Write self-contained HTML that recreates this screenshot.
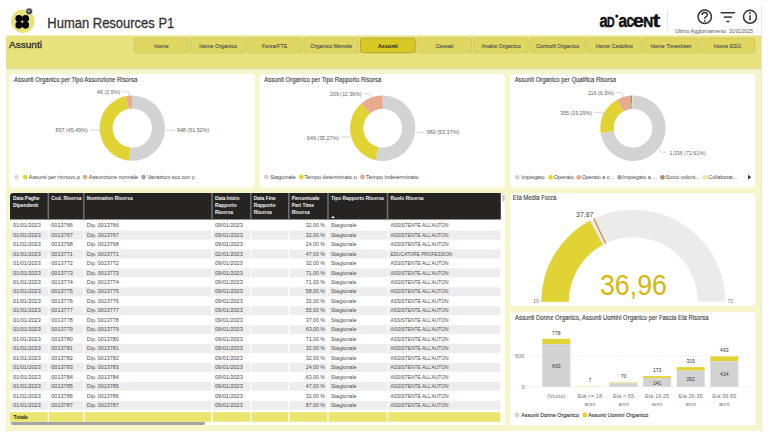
<!DOCTYPE html>
<html><head><meta charset="utf-8"><style>
html,body{margin:0;padding:0;width:768px;height:432px;overflow:hidden;background:#fff}
svg{display:block;font-family:"Liberation Sans",sans-serif}
</style></head><body>
<svg width="768" height="432" viewBox="0 0 768 432">
<rect x="0" y="0" width="768" height="432" fill="#fff"/>
<circle cx="22.85" cy="21.2" r="11.8" fill="#E8E27A"/>
<circle cx="18.95" cy="18.5" r="3.55" fill="#000"/>
<circle cx="18.95" cy="25.1" r="3.55" fill="#000"/>
<circle cx="25.55" cy="18.5" r="3.55" fill="#000"/>
<circle cx="25.55" cy="25.1" r="3.55" fill="#000"/>
<circle cx="29.1" cy="11.4" r="3.3" fill="#333" stroke="#fff" stroke-width="0.6"/>
<circle cx="28.8" cy="11.1" r="1.5" fill="#999"/>
<text x="47.3" y="28.4" font-size="14.1" fill="#333" text-anchor="start" font-weight="normal" textLength="127" lengthAdjust="spacingAndGlyphs" stroke="#333" stroke-width="0.3">Human Resources P1</text>
<text x="599.6" y="26.7" font-size="18.8" fill="#111" text-anchor="start" font-weight="bold" textLength="8.2" lengthAdjust="spacingAndGlyphs" stroke="#111" stroke-width="0.45">a</text>
<text x="607.0" y="26.7" font-size="14.4" fill="#111" text-anchor="start" font-weight="bold" textLength="7.6" lengthAdjust="spacingAndGlyphs" stroke="#111" stroke-width="0.45">D</text>
<circle cx="616.8" cy="16.1" r="1.55" fill="#111"/>
<text x="618.6" y="26.7" font-size="18.8" fill="#111" text-anchor="start" font-weight="bold" textLength="8.6" lengthAdjust="spacingAndGlyphs" stroke="#111" stroke-width="0.45">a</text>
<text x="626.6" y="26.7" font-size="18.8" fill="#111" text-anchor="start" font-weight="bold" textLength="7.4" lengthAdjust="spacingAndGlyphs" stroke="#111" stroke-width="0.45">c</text>
<text x="632.8" y="26.7" font-size="18.8" fill="#111" text-anchor="start" font-weight="bold" textLength="11.2" lengthAdjust="spacingAndGlyphs" stroke="#111" stroke-width="0.45">e</text>
<text x="643.2" y="26.7" font-size="14.4" fill="#111" text-anchor="start" font-weight="bold" textLength="10.0" lengthAdjust="spacingAndGlyphs" stroke="#111" stroke-width="0.45">N</text>
<text x="652.4" y="26.7" font-size="18.8" fill="#111" text-anchor="start" font-weight="bold" textLength="7.6" lengthAdjust="spacingAndGlyphs" stroke="#111" stroke-width="0.45">t</text>
<line x1="667.4" y1="10.7" x2="667.4" y2="30.5" stroke="#ddd" stroke-width="0.8"/>
<circle cx="704.75" cy="16.8" r="6.7" fill="none" stroke="#333" stroke-width="1.5"/>
<path d="M702.1,14.9 Q702.1,12.5 704.75,12.5 Q707.4,12.5 707.4,14.8 Q707.4,16.3 705.6,17.1 Q704.75,17.6 704.75,18.9" fill="none" stroke="#333" stroke-width="1.4"/>
<circle cx="704.75" cy="20.9" r="0.9" fill="#333"/>
<line x1="720.6" y1="12.75" x2="735" y2="12.75" stroke="#333" stroke-width="1.5"/>
<line x1="723.8" y1="17.1" x2="731.9" y2="17.1" stroke="#333" stroke-width="1.5"/>
<line x1="726.3" y1="21.5" x2="729.4" y2="21.5" stroke="#333" stroke-width="1.5"/>
<circle cx="750" cy="16.8" r="6.5" fill="none" stroke="#333" stroke-width="1.5"/>
<rect x="749.2" y="15.3" width="1.6" height="5" fill="#333"/>
<circle cx="750" cy="13" r="0.95" fill="#333"/>
<text x="675" y="32.5" font-size="5" fill="#555" text-anchor="start" font-weight="normal" textLength="51" lengthAdjust="spacingAndGlyphs" >Ultimo Aggiornamento</text>
<text x="729" y="32.5" font-size="5" fill="#555" text-anchor="start" font-weight="normal" textLength="24" lengthAdjust="spacingAndGlyphs" >31/01/2025</text>
<line x1="761.5" y1="6" x2="761.5" y2="432" stroke="#e6e6e6" stroke-width="1"/>
<rect x="6" y="35.5" width="755" height="33" fill="#E8E27C"/>
<text x="9" y="48.4" font-size="9.9" fill="#333" text-anchor="start" font-weight="normal" textLength="33" lengthAdjust="spacingAndGlyphs" stroke="#333" stroke-width="0.35">Assunti</text>
<rect x="134.20" y="38.2" width="54.5" height="14.6" rx="1.5" fill="#DFD762" stroke="#C9C05C" stroke-width="0.7"/>
<text x="161.45" y="47.8" font-size="6.0" fill="#444" text-anchor="middle" font-weight="normal" textLength="14.4" lengthAdjust="spacingAndGlyphs" stroke="#555" stroke-width="0.1">Home</text>
<rect x="190.80" y="38.2" width="54.5" height="14.6" rx="1.5" fill="#DFD762" stroke="#C9C05C" stroke-width="0.7"/>
<text x="218.05" y="47.8" font-size="6.0" fill="#444" text-anchor="middle" font-weight="normal" textLength="37.81" lengthAdjust="spacingAndGlyphs" stroke="#555" stroke-width="0.1">Home Organico</text>
<rect x="247.40" y="38.2" width="54.5" height="14.6" rx="1.5" fill="#DFD762" stroke="#C9C05C" stroke-width="0.7"/>
<text x="274.65" y="47.8" font-size="6.0" fill="#444" text-anchor="middle" font-weight="normal" textLength="25.5" lengthAdjust="spacingAndGlyphs" stroke="#555" stroke-width="0.1">Forza/FTE</text>
<rect x="304.00" y="38.2" width="54.5" height="14.6" rx="1.5" fill="#DFD762" stroke="#C9C05C" stroke-width="0.7"/>
<text x="331.25" y="47.8" font-size="6.0" fill="#444" text-anchor="middle" font-weight="normal" textLength="42.02" lengthAdjust="spacingAndGlyphs" stroke="#555" stroke-width="0.1">Organico Mensile</text>
<rect x="360.60" y="38.2" width="54.5" height="14.6" rx="1.5" fill="#D8C823" stroke="#AFA22E" stroke-width="0.9"/>
<text x="387.85" y="47.8" font-size="6.0" fill="#222" text-anchor="middle" font-weight="bold" textLength="19.8" lengthAdjust="spacingAndGlyphs" >Assunti</text>
<rect x="417.20" y="38.2" width="54.5" height="14.6" rx="1.5" fill="#DFD762" stroke="#C9C05C" stroke-width="0.7"/>
<text x="444.45" y="47.8" font-size="6.0" fill="#444" text-anchor="middle" font-weight="normal" textLength="18.01" lengthAdjust="spacingAndGlyphs" stroke="#555" stroke-width="0.1">Cessati</text>
<rect x="473.80" y="38.2" width="54.5" height="14.6" rx="1.5" fill="#DFD762" stroke="#C9C05C" stroke-width="0.7"/>
<text x="501.05" y="47.8" font-size="6.0" fill="#444" text-anchor="middle" font-weight="normal" textLength="39.32" lengthAdjust="spacingAndGlyphs" stroke="#555" stroke-width="0.1">Analisi Organico</text>
<rect x="530.40" y="38.2" width="54.5" height="14.6" rx="1.5" fill="#DFD762" stroke="#C9C05C" stroke-width="0.7"/>
<text x="557.65" y="47.8" font-size="6.0" fill="#444" text-anchor="middle" font-weight="normal" textLength="43.22" lengthAdjust="spacingAndGlyphs" stroke="#555" stroke-width="0.1">Controlli Organico</text>
<rect x="587.00" y="38.2" width="54.5" height="14.6" rx="1.5" fill="#DFD762" stroke="#C9C05C" stroke-width="0.7"/>
<text x="614.25" y="47.8" font-size="6.0" fill="#444" text-anchor="middle" font-weight="normal" textLength="37.22" lengthAdjust="spacingAndGlyphs" stroke="#555" stroke-width="0.1">Home Cedolino</text>
<rect x="643.60" y="38.2" width="54.5" height="14.6" rx="1.5" fill="#DFD762" stroke="#C9C05C" stroke-width="0.7"/>
<text x="670.85" y="47.8" font-size="6.0" fill="#444" text-anchor="middle" font-weight="normal" textLength="40.81" lengthAdjust="spacingAndGlyphs" stroke="#555" stroke-width="0.1">Home Timesheet</text>
<rect x="700.20" y="38.2" width="54.5" height="14.6" rx="1.5" fill="#DFD762" stroke="#C9C05C" stroke-width="0.7"/>
<text x="727.45" y="47.8" font-size="6.0" fill="#444" text-anchor="middle" font-weight="normal" textLength="27.31" lengthAdjust="spacingAndGlyphs" stroke="#555" stroke-width="0.1">Home ESG</text>
<rect x="6" y="68.5" width="755" height="362.5" fill="#F7F5CA"/>
<rect x="6" y="68.3" width="755" height="0.9" fill="#D6D3A6"/>
<rect x="9.2" y="74" width="245.60" height="113.50" rx="4" fill="#fff"/>
<rect x="259.5" y="74" width="245.50" height="113.50" rx="4" fill="#fff"/>
<rect x="510" y="74" width="245.20" height="113.50" rx="4" fill="#fff"/>
<rect x="9.6" y="193" width="495.40" height="232.00" rx="3" fill="#fff"/>
<rect x="510" y="193" width="245.30" height="113.00" rx="4" fill="#fff"/>
<rect x="510" y="312.2" width="245.40" height="113.30" rx="4" fill="#fff"/>
<text x="14" y="82.1" font-size="6.3" fill="#3a3a3a" text-anchor="start" font-weight="normal" textLength="123.3" lengthAdjust="spacingAndGlyphs" stroke="#444" stroke-width="0.12">Assunti Organico per Tipo Assunzione Risorsa</text>
<path d="M132.30,95.40 A32.7,32.7 0 1 1 129.18,160.65 L130.43,147.61 A19.6,19.6 0 1 0 132.30,108.50 Z" fill="#D3D3D3"/>
<path d="M129.18,160.65 A32.7,32.7 0 0 1 126.19,95.98 L128.64,108.84 A19.6,19.6 0 0 0 130.43,147.61 Z" fill="#E2D335"/>
<path d="M126.19,95.98 A32.7,32.7 0 0 1 131.29,95.42 L131.70,108.51 A19.6,19.6 0 0 0 128.64,108.84 Z" fill="#E8AA8C"/>
<path d="M131.29,95.42 A32.7,32.7 0 0 1 132.30,95.40 L132.30,108.50 A19.6,19.6 0 0 0 131.70,108.51 Z" fill="#A6A6A6"/>
<text x="96.9" y="94.4" font-size="6" fill="#666" text-anchor="start" font-weight="normal" textLength="23.4" lengthAdjust="spacingAndGlyphs" >46 (2,5%)</text>
<polyline points="122.7,91.8 128.8,91.8 128.8,96" fill="none" stroke="#bbb" stroke-width="0.6"/>
<text x="55.6" y="132.1" font-size="6" fill="#666" text-anchor="start" font-weight="normal" textLength="32.3" lengthAdjust="spacingAndGlyphs" >837 (45,49%)</text>
<line x1="90" y1="130" x2="99.6" y2="130" stroke="#bbb" stroke-width="0.6"/>
<text x="176.9" y="132.3" font-size="6" fill="#666" text-anchor="start" font-weight="normal" textLength="32.3" lengthAdjust="spacingAndGlyphs" >948 (51,52%)</text>
<line x1="165.6" y1="130.2" x2="175" y2="130.2" stroke="#bbb" stroke-width="0.6"/>
<circle cx="16.5" cy="177.1" r="2.4" fill="#D9D9D9"/>
<circle cx="25.25" cy="177.1" r="2.4" fill="#E2D335"/>
<circle cx="85" cy="177.1" r="2.4" fill="#E8AA8C"/>
<circle cx="143.6" cy="177.1" r="2.4" fill="#A6A6A6"/>
<text x="28.75" y="179.1" font-size="5.6" fill="#444" text-anchor="start" font-weight="normal" textLength="51.3" lengthAdjust="spacingAndGlyphs" >Assunti per rinnovo p</text>
<text x="88.75" y="179.1" font-size="5.6" fill="#444" text-anchor="start" font-weight="normal" textLength="49.4" lengthAdjust="spacingAndGlyphs" >Assunzione normale</text>
<text x="147.4" y="179.1" font-size="5.6" fill="#444" text-anchor="start" font-weight="normal" textLength="47" lengthAdjust="spacingAndGlyphs" >Variazioni soc.con c</text>
<text x="264.3" y="82.1" font-size="6.3" fill="#3a3a3a" text-anchor="start" font-weight="normal" textLength="117" lengthAdjust="spacingAndGlyphs" stroke="#444" stroke-width="0.12">Assunti Organico per Tipo Rapporto Risorsa</text>
<path d="M382.70,95.50 A32.7,32.7 0 1 1 375.83,160.17 L378.62,147.17 A19.4,19.4 0 1 0 382.70,108.80 Z" fill="#D3D3D3"/>
<path d="M375.83,160.17 A32.7,32.7 0 0 1 361.29,103.48 L370.00,113.54 A19.4,19.4 0 0 0 378.62,147.17 Z" fill="#E2D335"/>
<path d="M361.29,103.48 A32.7,32.7 0 0 1 382.70,95.50 L382.70,108.80 A19.4,19.4 0 0 0 370.00,113.54 Z" fill="#E8AA8C"/>
<text x="330" y="96.4" font-size="6" fill="#666" text-anchor="start" font-weight="normal" textLength="31.6" lengthAdjust="spacingAndGlyphs" >209 (11,36%)</text>
<polyline points="364.3,93.7 369.6,93.7 371.7,97.2" fill="none" stroke="#bbb" stroke-width="0.6"/>
<text x="307" y="139.5" font-size="6" fill="#666" text-anchor="start" font-weight="normal" textLength="32" lengthAdjust="spacingAndGlyphs" >649 (35,27%)</text>
<line x1="341.5" y1="137.2" x2="349.8" y2="136.8" stroke="#bbb" stroke-width="0.6"/>
<text x="426.7" y="134.3" font-size="6" fill="#666" text-anchor="start" font-weight="normal" textLength="32.6" lengthAdjust="spacingAndGlyphs" >982 (53,37%)</text>
<line x1="416.5" y1="132.3" x2="425" y2="132.3" stroke="#bbb" stroke-width="0.6"/>
<circle cx="266.3" cy="176.9" r="2.4" fill="#D3D3D3"/>
<circle cx="301.3" cy="176.9" r="2.4" fill="#E2D335"/>
<circle cx="362.5" cy="176.9" r="2.4" fill="#E8AA8C"/>
<text x="270.2" y="178.9" font-size="5.6" fill="#444" text-anchor="start" font-weight="normal" textLength="25.5" lengthAdjust="spacingAndGlyphs" >Stagionale</text>
<text x="304.2" y="178.9" font-size="5.6" fill="#444" text-anchor="start" font-weight="normal" textLength="52.7" lengthAdjust="spacingAndGlyphs" >Tempo determinato o</text>
<text x="366" y="178.9" font-size="5.6" fill="#444" text-anchor="start" font-weight="normal" textLength="52.7" lengthAdjust="spacingAndGlyphs" >Tempo indeterminato</text>
<text x="514.7" y="82.1" font-size="6.3" fill="#3a3a3a" text-anchor="start" font-weight="normal" textLength="101.3" lengthAdjust="spacingAndGlyphs" stroke="#444" stroke-width="0.12">Assunti Organico per Qualifica Risorsa</text>
<path d="M633.00,95.50 A32.7,32.7 0 1 1 600.67,133.09 L613.92,131.09 A19.3,19.3 0 1 0 633.00,108.90 Z" fill="#D3D3D3"/>
<path d="M600.67,133.09 A32.7,32.7 0 0 1 617.07,99.64 L623.60,111.35 A19.3,19.3 0 0 0 613.92,131.09 Z" fill="#E2D335"/>
<path d="M617.07,99.64 A32.7,32.7 0 0 1 629.31,95.71 L630.82,109.02 A19.3,19.3 0 0 0 623.60,111.35 Z" fill="#E8AA8C"/>
<path d="M629.31,95.71 A32.7,32.7 0 0 1 630.74,95.58 L631.67,108.95 A19.3,19.3 0 0 0 630.82,109.02 Z" fill="#A6A6A6"/>
<path d="M630.74,95.58 A32.7,32.7 0 0 1 632.18,95.51 L632.51,108.91 A19.3,19.3 0 0 0 631.67,108.95 Z" fill="#A88E70"/>
<path d="M632.18,95.51 A32.7,32.7 0 0 1 633.00,95.50 L633.00,108.90 A19.3,19.3 0 0 0 632.51,108.91 Z" fill="#EEE69A"/>
<text x="588" y="95.3" font-size="6" fill="#666" text-anchor="start" font-weight="normal" textLength="25.9" lengthAdjust="spacingAndGlyphs" >116 (6,3%)</text>
<polyline points="616,92.6 621.7,92.6 624.4,97.9" fill="none" stroke="#bbb" stroke-width="0.6"/>
<text x="560.2" y="114.7" font-size="6" fill="#666" text-anchor="start" font-weight="normal" textLength="31.8" lengthAdjust="spacingAndGlyphs" >355 (19,29%)</text>
<polyline points="593.9,112.3 602.2,112.3 604.2,114" fill="none" stroke="#bbb" stroke-width="0.6"/>
<text x="669.4" y="154.5" font-size="6" fill="#666" text-anchor="start" font-weight="normal" textLength="36.4" lengthAdjust="spacingAndGlyphs" >1.336 (72,61%)</text>
<polyline points="658.75,149.9 661.4,152.2 666.6,152.2" fill="none" stroke="#bbb" stroke-width="0.6"/>
<circle cx="517.3" cy="177.3" r="2.4" fill="#D3D3D3"/>
<circle cx="550.7" cy="177.3" r="2.4" fill="#E2D335"/>
<circle cx="578.7" cy="177.3" r="2.4" fill="#E8AA8C"/>
<circle cx="619.7" cy="177.3" r="2.4" fill="#A6A6A6"/>
<circle cx="662.5" cy="177.3" r="2.4" fill="#A88E70"/>
<circle cx="705" cy="177.3" r="2.4" fill="#EEE69A"/>
<text x="521.2" y="179.3" font-size="5.6" fill="#444" text-anchor="start" font-weight="normal" textLength="23.3" lengthAdjust="spacingAndGlyphs" >Impiegato</text>
<text x="553.7" y="179.3" font-size="5.6" fill="#444" text-anchor="start" font-weight="normal" textLength="20" lengthAdjust="spacingAndGlyphs" >Operaio</text>
<text x="582" y="179.3" font-size="5.6" fill="#444" text-anchor="start" font-weight="normal" textLength="31.7" lengthAdjust="spacingAndGlyphs" >Operaio a c...</text>
<text x="622.6" y="179.3" font-size="5.6" fill="#444" text-anchor="start" font-weight="normal" textLength="34.1" lengthAdjust="spacingAndGlyphs" >Impiegato a ...</text>
<text x="665.6" y="179.3" font-size="5.6" fill="#444" text-anchor="start" font-weight="normal" textLength="34.1" lengthAdjust="spacingAndGlyphs" >Socio volont...</text>
<text x="708.3" y="179.3" font-size="5.6" fill="#444" text-anchor="start" font-weight="normal" textLength="28.9" lengthAdjust="spacingAndGlyphs" >Collaborat...</text>
<path d="M748,174.8 L751.2,177.2 L748,179.6 Z" fill="#333"/>
<path d="M10.0,219.6 L10.0,196 Q10.0,193 13.0,193 L500.8,193 L500.8,219.6 Z" fill="#252423"/>
<rect x="47.55" y="193" width="1.5" height="26.5" fill="#727170"/>
<rect x="83.05" y="193" width="1.5" height="26.5" fill="#727170"/>
<rect x="211.25" y="193" width="1.5" height="26.5" fill="#727170"/>
<rect x="250.05" y="193" width="1.5" height="26.5" fill="#727170"/>
<rect x="288.05" y="193" width="1.5" height="26.5" fill="#727170"/>
<rect x="327.25" y="193" width="1.5" height="26.5" fill="#727170"/>
<rect x="386.75" y="193" width="1.5" height="26.5" fill="#727170"/>
<text x="12.9" y="200.1" font-size="5.9" fill="#f4f4f4" text-anchor="start" font-weight="bold" textLength="26.69" lengthAdjust="spacingAndGlyphs" >Data Paghe</text>
<text x="12.9" y="206.85" font-size="5.9" fill="#f4f4f4" text-anchor="start" font-weight="bold" textLength="25.31" lengthAdjust="spacingAndGlyphs" >Dipendenti</text>
<text x="51.2" y="200.1" font-size="5.9" fill="#f4f4f4" text-anchor="start" font-weight="bold" textLength="30.22" lengthAdjust="spacingAndGlyphs" >Cod. Risorsa</text>
<text x="86.7" y="200.1" font-size="5.9" fill="#f4f4f4" text-anchor="start" font-weight="bold" textLength="46.01" lengthAdjust="spacingAndGlyphs" >Nominativo Risorsa</text>
<text x="214.9" y="200.1" font-size="5.9" fill="#f4f4f4" text-anchor="start" font-weight="bold" textLength="24.5" lengthAdjust="spacingAndGlyphs" >Data Inizio</text>
<text x="214.9" y="206.85" font-size="5.9" fill="#f4f4f4" text-anchor="start" font-weight="bold" textLength="21.77" lengthAdjust="spacingAndGlyphs" >Rapporto</text>
<text x="214.9" y="213.6" font-size="5.9" fill="#f4f4f4" text-anchor="start" font-weight="bold" textLength="17.97" lengthAdjust="spacingAndGlyphs" >Risorsa</text>
<text x="253.7" y="200.1" font-size="5.9" fill="#f4f4f4" text-anchor="start" font-weight="bold" textLength="22.05" lengthAdjust="spacingAndGlyphs" >Data Fine</text>
<text x="253.7" y="206.85" font-size="5.9" fill="#f4f4f4" text-anchor="start" font-weight="bold" textLength="21.77" lengthAdjust="spacingAndGlyphs" >Rapporto</text>
<text x="253.7" y="213.6" font-size="5.9" fill="#f4f4f4" text-anchor="start" font-weight="bold" textLength="17.97" lengthAdjust="spacingAndGlyphs" >Risorsa</text>
<text x="291.7" y="200.1" font-size="5.9" fill="#f4f4f4" text-anchor="start" font-weight="bold" textLength="27.78" lengthAdjust="spacingAndGlyphs" >Percentuale</text>
<text x="291.7" y="206.85" font-size="5.9" fill="#f4f4f4" text-anchor="start" font-weight="bold" textLength="22.24" lengthAdjust="spacingAndGlyphs" >Part Time</text>
<text x="291.7" y="213.6" font-size="5.9" fill="#f4f4f4" text-anchor="start" font-weight="bold" textLength="17.97" lengthAdjust="spacingAndGlyphs" >Risorsa</text>
<text x="330.9" y="200.1" font-size="5.9" fill="#f4f4f4" text-anchor="start" font-weight="bold" textLength="52.72" lengthAdjust="spacingAndGlyphs" >Tipo Rapporto Risorsa</text>
<text x="390.4" y="200.1" font-size="5.9" fill="#f4f4f4" text-anchor="start" font-weight="bold" textLength="33.21" lengthAdjust="spacingAndGlyphs" >Ruolo Risorsa</text>
<path d="M331,218 L333,216 L335,218 Z" fill="#fff"/>
<rect x="502.4" y="194.5" width="2.2" height="7" rx="1" fill="#c4c4c4"/>
<text x="13" y="227.24" font-size="6" fill="#4a4a4a" text-anchor="start" font-weight="normal" textLength="27.8" lengthAdjust="spacingAndGlyphs" >01/01/2023</text>
<text x="51.3" y="227.24" font-size="6" fill="#4a4a4a" text-anchor="start" font-weight="normal" textLength="21.5" lengthAdjust="spacingAndGlyphs" >0013766</text>
<text x="86.8" y="227.24" font-size="6" fill="#4a4a4a" text-anchor="start" font-weight="normal" textLength="32" lengthAdjust="spacingAndGlyphs" >Dip. 0013766</text>
<text x="215" y="227.24" font-size="6" fill="#4a4a4a" text-anchor="start" font-weight="normal" textLength="27.8" lengthAdjust="spacingAndGlyphs" >09/01/2023</text>
<text x="325" y="227.24" font-size="6" fill="#4a4a4a" text-anchor="end" font-weight="normal" textLength="19.2" lengthAdjust="spacingAndGlyphs" >32,00 %</text>
<text x="331" y="227.24" font-size="6" fill="#4a4a4a" text-anchor="start" font-weight="normal" textLength="25.6" lengthAdjust="spacingAndGlyphs" >Stagionale</text>
<text x="390.5" y="227.24" font-size="6" fill="#4a4a4a" text-anchor="start" font-weight="normal" textLength="58" lengthAdjust="spacingAndGlyphs" >ASSISTENTE ALL'AUTON</text>
<rect x="10.00" y="230.50" width="37.70" height="9.0" fill="#EDEDED"/>
<rect x="48.90" y="230.50" width="34.30" height="9.0" fill="#EDEDED"/>
<rect x="84.40" y="230.50" width="127.00" height="9.0" fill="#EDEDED"/>
<rect x="212.60" y="230.50" width="37.60" height="9.0" fill="#EDEDED"/>
<rect x="251.40" y="230.50" width="36.80" height="9.0" fill="#EDEDED"/>
<rect x="289.40" y="230.50" width="38.00" height="9.0" fill="#EDEDED"/>
<rect x="328.60" y="230.50" width="58.30" height="9.0" fill="#EDEDED"/>
<rect x="388.10" y="230.50" width="112.30" height="9.0" fill="#EDEDED"/>
<text x="13" y="236.7" font-size="6" fill="#4a4a4a" text-anchor="start" font-weight="normal" textLength="27.8" lengthAdjust="spacingAndGlyphs" >01/01/2023</text>
<text x="51.3" y="236.7" font-size="6" fill="#4a4a4a" text-anchor="start" font-weight="normal" textLength="21.5" lengthAdjust="spacingAndGlyphs" >0013767</text>
<text x="86.8" y="236.7" font-size="6" fill="#4a4a4a" text-anchor="start" font-weight="normal" textLength="32" lengthAdjust="spacingAndGlyphs" >Dip. 0013767</text>
<text x="215" y="236.7" font-size="6" fill="#4a4a4a" text-anchor="start" font-weight="normal" textLength="27.8" lengthAdjust="spacingAndGlyphs" >09/01/2023</text>
<text x="325" y="236.7" font-size="6" fill="#4a4a4a" text-anchor="end" font-weight="normal" textLength="19.2" lengthAdjust="spacingAndGlyphs" >32,00 %</text>
<text x="331" y="236.7" font-size="6" fill="#4a4a4a" text-anchor="start" font-weight="normal" textLength="25.6" lengthAdjust="spacingAndGlyphs" >Stagionale</text>
<text x="390.5" y="236.7" font-size="6" fill="#4a4a4a" text-anchor="start" font-weight="normal" textLength="58" lengthAdjust="spacingAndGlyphs" >ASSISTENTE ALL'AUTON</text>
<text x="13" y="246.16" font-size="6" fill="#4a4a4a" text-anchor="start" font-weight="normal" textLength="27.8" lengthAdjust="spacingAndGlyphs" >01/01/2023</text>
<text x="51.3" y="246.16" font-size="6" fill="#4a4a4a" text-anchor="start" font-weight="normal" textLength="21.5" lengthAdjust="spacingAndGlyphs" >0013768</text>
<text x="86.8" y="246.16" font-size="6" fill="#4a4a4a" text-anchor="start" font-weight="normal" textLength="32" lengthAdjust="spacingAndGlyphs" >Dip. 0013768</text>
<text x="215" y="246.16" font-size="6" fill="#4a4a4a" text-anchor="start" font-weight="normal" textLength="27.8" lengthAdjust="spacingAndGlyphs" >09/01/2023</text>
<text x="325" y="246.16" font-size="6" fill="#4a4a4a" text-anchor="end" font-weight="normal" textLength="19.2" lengthAdjust="spacingAndGlyphs" >24,00 %</text>
<text x="331" y="246.16" font-size="6" fill="#4a4a4a" text-anchor="start" font-weight="normal" textLength="25.6" lengthAdjust="spacingAndGlyphs" >Stagionale</text>
<text x="390.5" y="246.16" font-size="6" fill="#4a4a4a" text-anchor="start" font-weight="normal" textLength="58" lengthAdjust="spacingAndGlyphs" >ASSISTENTE ALL'AUTON</text>
<rect x="10.00" y="249.42" width="37.70" height="9.0" fill="#EDEDED"/>
<rect x="48.90" y="249.42" width="34.30" height="9.0" fill="#EDEDED"/>
<rect x="84.40" y="249.42" width="127.00" height="9.0" fill="#EDEDED"/>
<rect x="212.60" y="249.42" width="37.60" height="9.0" fill="#EDEDED"/>
<rect x="251.40" y="249.42" width="36.80" height="9.0" fill="#EDEDED"/>
<rect x="289.40" y="249.42" width="38.00" height="9.0" fill="#EDEDED"/>
<rect x="328.60" y="249.42" width="58.30" height="9.0" fill="#EDEDED"/>
<rect x="388.10" y="249.42" width="112.30" height="9.0" fill="#EDEDED"/>
<text x="13" y="255.62" font-size="6" fill="#4a4a4a" text-anchor="start" font-weight="normal" textLength="27.8" lengthAdjust="spacingAndGlyphs" >01/01/2023</text>
<text x="51.3" y="255.62" font-size="6" fill="#4a4a4a" text-anchor="start" font-weight="normal" textLength="21.5" lengthAdjust="spacingAndGlyphs" >0013771</text>
<text x="86.8" y="255.62" font-size="6" fill="#4a4a4a" text-anchor="start" font-weight="normal" textLength="32" lengthAdjust="spacingAndGlyphs" >Dip. 0013771</text>
<text x="215" y="255.62" font-size="6" fill="#4a4a4a" text-anchor="start" font-weight="normal" textLength="27.8" lengthAdjust="spacingAndGlyphs" >02/01/2023</text>
<text x="325" y="255.62" font-size="6" fill="#4a4a4a" text-anchor="end" font-weight="normal" textLength="19.2" lengthAdjust="spacingAndGlyphs" >47,00 %</text>
<text x="331" y="255.62" font-size="6" fill="#4a4a4a" text-anchor="start" font-weight="normal" textLength="25.6" lengthAdjust="spacingAndGlyphs" >Stagionale</text>
<text x="390.5" y="255.62" font-size="6" fill="#4a4a4a" text-anchor="start" font-weight="normal" textLength="61.8" lengthAdjust="spacingAndGlyphs" >EDUCATORE PROFESSION</text>
<text x="13" y="265.08" font-size="6" fill="#4a4a4a" text-anchor="start" font-weight="normal" textLength="27.8" lengthAdjust="spacingAndGlyphs" >01/01/2023</text>
<text x="51.3" y="265.08" font-size="6" fill="#4a4a4a" text-anchor="start" font-weight="normal" textLength="21.5" lengthAdjust="spacingAndGlyphs" >0013772</text>
<text x="86.8" y="265.08" font-size="6" fill="#4a4a4a" text-anchor="start" font-weight="normal" textLength="32" lengthAdjust="spacingAndGlyphs" >Dip. 0013772</text>
<text x="215" y="265.08" font-size="6" fill="#4a4a4a" text-anchor="start" font-weight="normal" textLength="27.8" lengthAdjust="spacingAndGlyphs" >09/01/2023</text>
<text x="325" y="265.08" font-size="6" fill="#4a4a4a" text-anchor="end" font-weight="normal" textLength="19.2" lengthAdjust="spacingAndGlyphs" >32,00 %</text>
<text x="331" y="265.08" font-size="6" fill="#4a4a4a" text-anchor="start" font-weight="normal" textLength="25.6" lengthAdjust="spacingAndGlyphs" >Stagionale</text>
<text x="390.5" y="265.08" font-size="6" fill="#4a4a4a" text-anchor="start" font-weight="normal" textLength="58" lengthAdjust="spacingAndGlyphs" >ASSISTENTE ALL'AUTON</text>
<rect x="10.00" y="268.34" width="37.70" height="9.0" fill="#EDEDED"/>
<rect x="48.90" y="268.34" width="34.30" height="9.0" fill="#EDEDED"/>
<rect x="84.40" y="268.34" width="127.00" height="9.0" fill="#EDEDED"/>
<rect x="212.60" y="268.34" width="37.60" height="9.0" fill="#EDEDED"/>
<rect x="251.40" y="268.34" width="36.80" height="9.0" fill="#EDEDED"/>
<rect x="289.40" y="268.34" width="38.00" height="9.0" fill="#EDEDED"/>
<rect x="328.60" y="268.34" width="58.30" height="9.0" fill="#EDEDED"/>
<rect x="388.10" y="268.34" width="112.30" height="9.0" fill="#EDEDED"/>
<text x="13" y="274.54" font-size="6" fill="#4a4a4a" text-anchor="start" font-weight="normal" textLength="27.8" lengthAdjust="spacingAndGlyphs" >01/01/2023</text>
<text x="51.3" y="274.54" font-size="6" fill="#4a4a4a" text-anchor="start" font-weight="normal" textLength="21.5" lengthAdjust="spacingAndGlyphs" >0013773</text>
<text x="86.8" y="274.54" font-size="6" fill="#4a4a4a" text-anchor="start" font-weight="normal" textLength="32" lengthAdjust="spacingAndGlyphs" >Dip. 0013773</text>
<text x="215" y="274.54" font-size="6" fill="#4a4a4a" text-anchor="start" font-weight="normal" textLength="27.8" lengthAdjust="spacingAndGlyphs" >09/01/2023</text>
<text x="325" y="274.54" font-size="6" fill="#4a4a4a" text-anchor="end" font-weight="normal" textLength="19.2" lengthAdjust="spacingAndGlyphs" >71,00 %</text>
<text x="331" y="274.54" font-size="6" fill="#4a4a4a" text-anchor="start" font-weight="normal" textLength="25.6" lengthAdjust="spacingAndGlyphs" >Stagionale</text>
<text x="390.5" y="274.54" font-size="6" fill="#4a4a4a" text-anchor="start" font-weight="normal" textLength="58" lengthAdjust="spacingAndGlyphs" >ASSISTENTE ALL'AUTON</text>
<text x="13" y="284.0" font-size="6" fill="#4a4a4a" text-anchor="start" font-weight="normal" textLength="27.8" lengthAdjust="spacingAndGlyphs" >01/01/2023</text>
<text x="51.3" y="284.0" font-size="6" fill="#4a4a4a" text-anchor="start" font-weight="normal" textLength="21.5" lengthAdjust="spacingAndGlyphs" >0013774</text>
<text x="86.8" y="284.0" font-size="6" fill="#4a4a4a" text-anchor="start" font-weight="normal" textLength="32" lengthAdjust="spacingAndGlyphs" >Dip. 0013774</text>
<text x="215" y="284.0" font-size="6" fill="#4a4a4a" text-anchor="start" font-weight="normal" textLength="27.8" lengthAdjust="spacingAndGlyphs" >09/01/2023</text>
<text x="325" y="284.0" font-size="6" fill="#4a4a4a" text-anchor="end" font-weight="normal" textLength="19.2" lengthAdjust="spacingAndGlyphs" >71,00 %</text>
<text x="331" y="284.0" font-size="6" fill="#4a4a4a" text-anchor="start" font-weight="normal" textLength="25.6" lengthAdjust="spacingAndGlyphs" >Stagionale</text>
<text x="390.5" y="284.0" font-size="6" fill="#4a4a4a" text-anchor="start" font-weight="normal" textLength="58" lengthAdjust="spacingAndGlyphs" >ASSISTENTE ALL'AUTON</text>
<rect x="10.00" y="287.26" width="37.70" height="9.0" fill="#EDEDED"/>
<rect x="48.90" y="287.26" width="34.30" height="9.0" fill="#EDEDED"/>
<rect x="84.40" y="287.26" width="127.00" height="9.0" fill="#EDEDED"/>
<rect x="212.60" y="287.26" width="37.60" height="9.0" fill="#EDEDED"/>
<rect x="251.40" y="287.26" width="36.80" height="9.0" fill="#EDEDED"/>
<rect x="289.40" y="287.26" width="38.00" height="9.0" fill="#EDEDED"/>
<rect x="328.60" y="287.26" width="58.30" height="9.0" fill="#EDEDED"/>
<rect x="388.10" y="287.26" width="112.30" height="9.0" fill="#EDEDED"/>
<text x="13" y="293.46" font-size="6" fill="#4a4a4a" text-anchor="start" font-weight="normal" textLength="27.8" lengthAdjust="spacingAndGlyphs" >01/01/2023</text>
<text x="51.3" y="293.46" font-size="6" fill="#4a4a4a" text-anchor="start" font-weight="normal" textLength="21.5" lengthAdjust="spacingAndGlyphs" >0013775</text>
<text x="86.8" y="293.46" font-size="6" fill="#4a4a4a" text-anchor="start" font-weight="normal" textLength="32" lengthAdjust="spacingAndGlyphs" >Dip. 0013775</text>
<text x="215" y="293.46" font-size="6" fill="#4a4a4a" text-anchor="start" font-weight="normal" textLength="27.8" lengthAdjust="spacingAndGlyphs" >09/01/2023</text>
<text x="325" y="293.46" font-size="6" fill="#4a4a4a" text-anchor="end" font-weight="normal" textLength="19.2" lengthAdjust="spacingAndGlyphs" >58,00 %</text>
<text x="331" y="293.46" font-size="6" fill="#4a4a4a" text-anchor="start" font-weight="normal" textLength="25.6" lengthAdjust="spacingAndGlyphs" >Stagionale</text>
<text x="390.5" y="293.46" font-size="6" fill="#4a4a4a" text-anchor="start" font-weight="normal" textLength="58" lengthAdjust="spacingAndGlyphs" >ASSISTENTE ALL'AUTON</text>
<text x="13" y="302.92" font-size="6" fill="#4a4a4a" text-anchor="start" font-weight="normal" textLength="27.8" lengthAdjust="spacingAndGlyphs" >01/01/2023</text>
<text x="51.3" y="302.92" font-size="6" fill="#4a4a4a" text-anchor="start" font-weight="normal" textLength="21.5" lengthAdjust="spacingAndGlyphs" >0013776</text>
<text x="86.8" y="302.92" font-size="6" fill="#4a4a4a" text-anchor="start" font-weight="normal" textLength="32" lengthAdjust="spacingAndGlyphs" >Dip. 0013776</text>
<text x="215" y="302.92" font-size="6" fill="#4a4a4a" text-anchor="start" font-weight="normal" textLength="27.8" lengthAdjust="spacingAndGlyphs" >09/01/2023</text>
<text x="325" y="302.92" font-size="6" fill="#4a4a4a" text-anchor="end" font-weight="normal" textLength="19.2" lengthAdjust="spacingAndGlyphs" >32,00 %</text>
<text x="331" y="302.92" font-size="6" fill="#4a4a4a" text-anchor="start" font-weight="normal" textLength="25.6" lengthAdjust="spacingAndGlyphs" >Stagionale</text>
<text x="390.5" y="302.92" font-size="6" fill="#4a4a4a" text-anchor="start" font-weight="normal" textLength="58" lengthAdjust="spacingAndGlyphs" >ASSISTENTE ALL'AUTON</text>
<rect x="10.00" y="306.18" width="37.70" height="9.0" fill="#EDEDED"/>
<rect x="48.90" y="306.18" width="34.30" height="9.0" fill="#EDEDED"/>
<rect x="84.40" y="306.18" width="127.00" height="9.0" fill="#EDEDED"/>
<rect x="212.60" y="306.18" width="37.60" height="9.0" fill="#EDEDED"/>
<rect x="251.40" y="306.18" width="36.80" height="9.0" fill="#EDEDED"/>
<rect x="289.40" y="306.18" width="38.00" height="9.0" fill="#EDEDED"/>
<rect x="328.60" y="306.18" width="58.30" height="9.0" fill="#EDEDED"/>
<rect x="388.10" y="306.18" width="112.30" height="9.0" fill="#EDEDED"/>
<text x="13" y="312.38" font-size="6" fill="#4a4a4a" text-anchor="start" font-weight="normal" textLength="27.8" lengthAdjust="spacingAndGlyphs" >01/01/2023</text>
<text x="51.3" y="312.38" font-size="6" fill="#4a4a4a" text-anchor="start" font-weight="normal" textLength="21.5" lengthAdjust="spacingAndGlyphs" >0013777</text>
<text x="86.8" y="312.38" font-size="6" fill="#4a4a4a" text-anchor="start" font-weight="normal" textLength="32" lengthAdjust="spacingAndGlyphs" >Dip. 0013777</text>
<text x="215" y="312.38" font-size="6" fill="#4a4a4a" text-anchor="start" font-weight="normal" textLength="27.8" lengthAdjust="spacingAndGlyphs" >09/01/2023</text>
<text x="325" y="312.38" font-size="6" fill="#4a4a4a" text-anchor="end" font-weight="normal" textLength="19.2" lengthAdjust="spacingAndGlyphs" >55,00 %</text>
<text x="331" y="312.38" font-size="6" fill="#4a4a4a" text-anchor="start" font-weight="normal" textLength="25.6" lengthAdjust="spacingAndGlyphs" >Stagionale</text>
<text x="390.5" y="312.38" font-size="6" fill="#4a4a4a" text-anchor="start" font-weight="normal" textLength="58" lengthAdjust="spacingAndGlyphs" >ASSISTENTE ALL'AUTON</text>
<text x="13" y="321.84" font-size="6" fill="#4a4a4a" text-anchor="start" font-weight="normal" textLength="27.8" lengthAdjust="spacingAndGlyphs" >01/01/2023</text>
<text x="51.3" y="321.84" font-size="6" fill="#4a4a4a" text-anchor="start" font-weight="normal" textLength="21.5" lengthAdjust="spacingAndGlyphs" >0013778</text>
<text x="86.8" y="321.84" font-size="6" fill="#4a4a4a" text-anchor="start" font-weight="normal" textLength="32" lengthAdjust="spacingAndGlyphs" >Dip. 0013778</text>
<text x="215" y="321.84" font-size="6" fill="#4a4a4a" text-anchor="start" font-weight="normal" textLength="27.8" lengthAdjust="spacingAndGlyphs" >09/01/2023</text>
<text x="325" y="321.84" font-size="6" fill="#4a4a4a" text-anchor="end" font-weight="normal" textLength="19.2" lengthAdjust="spacingAndGlyphs" >37,00 %</text>
<text x="331" y="321.84" font-size="6" fill="#4a4a4a" text-anchor="start" font-weight="normal" textLength="25.6" lengthAdjust="spacingAndGlyphs" >Stagionale</text>
<text x="390.5" y="321.84" font-size="6" fill="#4a4a4a" text-anchor="start" font-weight="normal" textLength="58" lengthAdjust="spacingAndGlyphs" >ASSISTENTE ALL'AUTON</text>
<rect x="10.00" y="325.10" width="37.70" height="9.0" fill="#EDEDED"/>
<rect x="48.90" y="325.10" width="34.30" height="9.0" fill="#EDEDED"/>
<rect x="84.40" y="325.10" width="127.00" height="9.0" fill="#EDEDED"/>
<rect x="212.60" y="325.10" width="37.60" height="9.0" fill="#EDEDED"/>
<rect x="251.40" y="325.10" width="36.80" height="9.0" fill="#EDEDED"/>
<rect x="289.40" y="325.10" width="38.00" height="9.0" fill="#EDEDED"/>
<rect x="328.60" y="325.10" width="58.30" height="9.0" fill="#EDEDED"/>
<rect x="388.10" y="325.10" width="112.30" height="9.0" fill="#EDEDED"/>
<text x="13" y="331.3" font-size="6" fill="#4a4a4a" text-anchor="start" font-weight="normal" textLength="27.8" lengthAdjust="spacingAndGlyphs" >01/01/2023</text>
<text x="51.3" y="331.3" font-size="6" fill="#4a4a4a" text-anchor="start" font-weight="normal" textLength="21.5" lengthAdjust="spacingAndGlyphs" >0013779</text>
<text x="86.8" y="331.3" font-size="6" fill="#4a4a4a" text-anchor="start" font-weight="normal" textLength="32" lengthAdjust="spacingAndGlyphs" >Dip. 0013779</text>
<text x="215" y="331.3" font-size="6" fill="#4a4a4a" text-anchor="start" font-weight="normal" textLength="27.8" lengthAdjust="spacingAndGlyphs" >09/01/2023</text>
<text x="325" y="331.3" font-size="6" fill="#4a4a4a" text-anchor="end" font-weight="normal" textLength="19.2" lengthAdjust="spacingAndGlyphs" >63,00 %</text>
<text x="331" y="331.3" font-size="6" fill="#4a4a4a" text-anchor="start" font-weight="normal" textLength="25.6" lengthAdjust="spacingAndGlyphs" >Stagionale</text>
<text x="390.5" y="331.3" font-size="6" fill="#4a4a4a" text-anchor="start" font-weight="normal" textLength="58" lengthAdjust="spacingAndGlyphs" >ASSISTENTE ALL'AUTON</text>
<text x="13" y="340.76" font-size="6" fill="#4a4a4a" text-anchor="start" font-weight="normal" textLength="27.8" lengthAdjust="spacingAndGlyphs" >01/01/2023</text>
<text x="51.3" y="340.76" font-size="6" fill="#4a4a4a" text-anchor="start" font-weight="normal" textLength="21.5" lengthAdjust="spacingAndGlyphs" >0013780</text>
<text x="86.8" y="340.76" font-size="6" fill="#4a4a4a" text-anchor="start" font-weight="normal" textLength="32" lengthAdjust="spacingAndGlyphs" >Dip. 0013780</text>
<text x="215" y="340.76" font-size="6" fill="#4a4a4a" text-anchor="start" font-weight="normal" textLength="27.8" lengthAdjust="spacingAndGlyphs" >09/01/2023</text>
<text x="325" y="340.76" font-size="6" fill="#4a4a4a" text-anchor="end" font-weight="normal" textLength="19.2" lengthAdjust="spacingAndGlyphs" >71,00 %</text>
<text x="331" y="340.76" font-size="6" fill="#4a4a4a" text-anchor="start" font-weight="normal" textLength="25.6" lengthAdjust="spacingAndGlyphs" >Stagionale</text>
<text x="390.5" y="340.76" font-size="6" fill="#4a4a4a" text-anchor="start" font-weight="normal" textLength="58" lengthAdjust="spacingAndGlyphs" >ASSISTENTE ALL'AUTON</text>
<rect x="10.00" y="344.02" width="37.70" height="9.0" fill="#EDEDED"/>
<rect x="48.90" y="344.02" width="34.30" height="9.0" fill="#EDEDED"/>
<rect x="84.40" y="344.02" width="127.00" height="9.0" fill="#EDEDED"/>
<rect x="212.60" y="344.02" width="37.60" height="9.0" fill="#EDEDED"/>
<rect x="251.40" y="344.02" width="36.80" height="9.0" fill="#EDEDED"/>
<rect x="289.40" y="344.02" width="38.00" height="9.0" fill="#EDEDED"/>
<rect x="328.60" y="344.02" width="58.30" height="9.0" fill="#EDEDED"/>
<rect x="388.10" y="344.02" width="112.30" height="9.0" fill="#EDEDED"/>
<text x="13" y="350.22" font-size="6" fill="#4a4a4a" text-anchor="start" font-weight="normal" textLength="27.8" lengthAdjust="spacingAndGlyphs" >01/01/2023</text>
<text x="51.3" y="350.22" font-size="6" fill="#4a4a4a" text-anchor="start" font-weight="normal" textLength="21.5" lengthAdjust="spacingAndGlyphs" >0013781</text>
<text x="86.8" y="350.22" font-size="6" fill="#4a4a4a" text-anchor="start" font-weight="normal" textLength="32" lengthAdjust="spacingAndGlyphs" >Dip. 0013781</text>
<text x="215" y="350.22" font-size="6" fill="#4a4a4a" text-anchor="start" font-weight="normal" textLength="27.8" lengthAdjust="spacingAndGlyphs" >09/01/2023</text>
<text x="325" y="350.22" font-size="6" fill="#4a4a4a" text-anchor="end" font-weight="normal" textLength="19.2" lengthAdjust="spacingAndGlyphs" >32,00 %</text>
<text x="331" y="350.22" font-size="6" fill="#4a4a4a" text-anchor="start" font-weight="normal" textLength="25.6" lengthAdjust="spacingAndGlyphs" >Stagionale</text>
<text x="390.5" y="350.22" font-size="6" fill="#4a4a4a" text-anchor="start" font-weight="normal" textLength="58" lengthAdjust="spacingAndGlyphs" >ASSISTENTE ALL'AUTON</text>
<text x="13" y="359.68" font-size="6" fill="#4a4a4a" text-anchor="start" font-weight="normal" textLength="27.8" lengthAdjust="spacingAndGlyphs" >01/01/2023</text>
<text x="51.3" y="359.68" font-size="6" fill="#4a4a4a" text-anchor="start" font-weight="normal" textLength="21.5" lengthAdjust="spacingAndGlyphs" >0013782</text>
<text x="86.8" y="359.68" font-size="6" fill="#4a4a4a" text-anchor="start" font-weight="normal" textLength="32" lengthAdjust="spacingAndGlyphs" >Dip. 0013782</text>
<text x="215" y="359.68" font-size="6" fill="#4a4a4a" text-anchor="start" font-weight="normal" textLength="27.8" lengthAdjust="spacingAndGlyphs" >09/01/2023</text>
<text x="325" y="359.68" font-size="6" fill="#4a4a4a" text-anchor="end" font-weight="normal" textLength="19.2" lengthAdjust="spacingAndGlyphs" >32,00 %</text>
<text x="331" y="359.68" font-size="6" fill="#4a4a4a" text-anchor="start" font-weight="normal" textLength="25.6" lengthAdjust="spacingAndGlyphs" >Stagionale</text>
<text x="390.5" y="359.68" font-size="6" fill="#4a4a4a" text-anchor="start" font-weight="normal" textLength="58" lengthAdjust="spacingAndGlyphs" >ASSISTENTE ALL'AUTON</text>
<rect x="10.00" y="362.94" width="37.70" height="9.0" fill="#EDEDED"/>
<rect x="48.90" y="362.94" width="34.30" height="9.0" fill="#EDEDED"/>
<rect x="84.40" y="362.94" width="127.00" height="9.0" fill="#EDEDED"/>
<rect x="212.60" y="362.94" width="37.60" height="9.0" fill="#EDEDED"/>
<rect x="251.40" y="362.94" width="36.80" height="9.0" fill="#EDEDED"/>
<rect x="289.40" y="362.94" width="38.00" height="9.0" fill="#EDEDED"/>
<rect x="328.60" y="362.94" width="58.30" height="9.0" fill="#EDEDED"/>
<rect x="388.10" y="362.94" width="112.30" height="9.0" fill="#EDEDED"/>
<text x="13" y="369.14" font-size="6" fill="#4a4a4a" text-anchor="start" font-weight="normal" textLength="27.8" lengthAdjust="spacingAndGlyphs" >01/01/2023</text>
<text x="51.3" y="369.14" font-size="6" fill="#4a4a4a" text-anchor="start" font-weight="normal" textLength="21.5" lengthAdjust="spacingAndGlyphs" >0013783</text>
<text x="86.8" y="369.14" font-size="6" fill="#4a4a4a" text-anchor="start" font-weight="normal" textLength="32" lengthAdjust="spacingAndGlyphs" >Dip. 0013783</text>
<text x="215" y="369.14" font-size="6" fill="#4a4a4a" text-anchor="start" font-weight="normal" textLength="27.8" lengthAdjust="spacingAndGlyphs" >09/01/2023</text>
<text x="325" y="369.14" font-size="6" fill="#4a4a4a" text-anchor="end" font-weight="normal" textLength="19.2" lengthAdjust="spacingAndGlyphs" >24,00 %</text>
<text x="331" y="369.14" font-size="6" fill="#4a4a4a" text-anchor="start" font-weight="normal" textLength="25.6" lengthAdjust="spacingAndGlyphs" >Stagionale</text>
<text x="390.5" y="369.14" font-size="6" fill="#4a4a4a" text-anchor="start" font-weight="normal" textLength="58" lengthAdjust="spacingAndGlyphs" >ASSISTENTE ALL'AUTON</text>
<text x="13" y="378.6" font-size="6" fill="#4a4a4a" text-anchor="start" font-weight="normal" textLength="27.8" lengthAdjust="spacingAndGlyphs" >01/01/2023</text>
<text x="51.3" y="378.6" font-size="6" fill="#4a4a4a" text-anchor="start" font-weight="normal" textLength="21.5" lengthAdjust="spacingAndGlyphs" >0013784</text>
<text x="86.8" y="378.6" font-size="6" fill="#4a4a4a" text-anchor="start" font-weight="normal" textLength="32" lengthAdjust="spacingAndGlyphs" >Dip. 0013784</text>
<text x="215" y="378.6" font-size="6" fill="#4a4a4a" text-anchor="start" font-weight="normal" textLength="27.8" lengthAdjust="spacingAndGlyphs" >09/01/2023</text>
<text x="325" y="378.6" font-size="6" fill="#4a4a4a" text-anchor="end" font-weight="normal" textLength="19.2" lengthAdjust="spacingAndGlyphs" >63,00 %</text>
<text x="331" y="378.6" font-size="6" fill="#4a4a4a" text-anchor="start" font-weight="normal" textLength="25.6" lengthAdjust="spacingAndGlyphs" >Stagionale</text>
<text x="390.5" y="378.6" font-size="6" fill="#4a4a4a" text-anchor="start" font-weight="normal" textLength="58" lengthAdjust="spacingAndGlyphs" >ASSISTENTE ALL'AUTON</text>
<rect x="10.00" y="381.86" width="37.70" height="9.0" fill="#EDEDED"/>
<rect x="48.90" y="381.86" width="34.30" height="9.0" fill="#EDEDED"/>
<rect x="84.40" y="381.86" width="127.00" height="9.0" fill="#EDEDED"/>
<rect x="212.60" y="381.86" width="37.60" height="9.0" fill="#EDEDED"/>
<rect x="251.40" y="381.86" width="36.80" height="9.0" fill="#EDEDED"/>
<rect x="289.40" y="381.86" width="38.00" height="9.0" fill="#EDEDED"/>
<rect x="328.60" y="381.86" width="58.30" height="9.0" fill="#EDEDED"/>
<rect x="388.10" y="381.86" width="112.30" height="9.0" fill="#EDEDED"/>
<text x="13" y="388.06" font-size="6" fill="#4a4a4a" text-anchor="start" font-weight="normal" textLength="27.8" lengthAdjust="spacingAndGlyphs" >01/01/2023</text>
<text x="51.3" y="388.06" font-size="6" fill="#4a4a4a" text-anchor="start" font-weight="normal" textLength="21.5" lengthAdjust="spacingAndGlyphs" >0013785</text>
<text x="86.8" y="388.06" font-size="6" fill="#4a4a4a" text-anchor="start" font-weight="normal" textLength="32" lengthAdjust="spacingAndGlyphs" >Dip. 0013785</text>
<text x="215" y="388.06" font-size="6" fill="#4a4a4a" text-anchor="start" font-weight="normal" textLength="27.8" lengthAdjust="spacingAndGlyphs" >09/01/2023</text>
<text x="325" y="388.06" font-size="6" fill="#4a4a4a" text-anchor="end" font-weight="normal" textLength="19.2" lengthAdjust="spacingAndGlyphs" >47,00 %</text>
<text x="331" y="388.06" font-size="6" fill="#4a4a4a" text-anchor="start" font-weight="normal" textLength="25.6" lengthAdjust="spacingAndGlyphs" >Stagionale</text>
<text x="390.5" y="388.06" font-size="6" fill="#4a4a4a" text-anchor="start" font-weight="normal" textLength="58" lengthAdjust="spacingAndGlyphs" >ASSISTENTE ALL'AUTON</text>
<text x="13" y="397.52" font-size="6" fill="#4a4a4a" text-anchor="start" font-weight="normal" textLength="27.8" lengthAdjust="spacingAndGlyphs" >01/01/2023</text>
<text x="51.3" y="397.52" font-size="6" fill="#4a4a4a" text-anchor="start" font-weight="normal" textLength="21.5" lengthAdjust="spacingAndGlyphs" >0013786</text>
<text x="86.8" y="397.52" font-size="6" fill="#4a4a4a" text-anchor="start" font-weight="normal" textLength="32" lengthAdjust="spacingAndGlyphs" >Dip. 0013786</text>
<text x="215" y="397.52" font-size="6" fill="#4a4a4a" text-anchor="start" font-weight="normal" textLength="27.8" lengthAdjust="spacingAndGlyphs" >09/01/2023</text>
<text x="325" y="397.52" font-size="6" fill="#4a4a4a" text-anchor="end" font-weight="normal" textLength="19.2" lengthAdjust="spacingAndGlyphs" >32,00 %</text>
<text x="331" y="397.52" font-size="6" fill="#4a4a4a" text-anchor="start" font-weight="normal" textLength="25.6" lengthAdjust="spacingAndGlyphs" >Stagionale</text>
<text x="390.5" y="397.52" font-size="6" fill="#4a4a4a" text-anchor="start" font-weight="normal" textLength="58" lengthAdjust="spacingAndGlyphs" >ASSISTENTE ALL'AUTON</text>
<rect x="10.00" y="400.78" width="37.70" height="9.0" fill="#EDEDED"/>
<rect x="48.90" y="400.78" width="34.30" height="9.0" fill="#EDEDED"/>
<rect x="84.40" y="400.78" width="127.00" height="9.0" fill="#EDEDED"/>
<rect x="212.60" y="400.78" width="37.60" height="9.0" fill="#EDEDED"/>
<rect x="251.40" y="400.78" width="36.80" height="9.0" fill="#EDEDED"/>
<rect x="289.40" y="400.78" width="38.00" height="9.0" fill="#EDEDED"/>
<rect x="328.60" y="400.78" width="58.30" height="9.0" fill="#EDEDED"/>
<rect x="388.10" y="400.78" width="112.30" height="9.0" fill="#EDEDED"/>
<text x="13" y="406.98" font-size="6" fill="#4a4a4a" text-anchor="start" font-weight="normal" textLength="27.8" lengthAdjust="spacingAndGlyphs" >01/01/2023</text>
<text x="51.3" y="406.98" font-size="6" fill="#4a4a4a" text-anchor="start" font-weight="normal" textLength="21.5" lengthAdjust="spacingAndGlyphs" >0013787</text>
<text x="86.8" y="406.98" font-size="6" fill="#4a4a4a" text-anchor="start" font-weight="normal" textLength="32" lengthAdjust="spacingAndGlyphs" >Dip. 0013787</text>
<text x="215" y="406.98" font-size="6" fill="#4a4a4a" text-anchor="start" font-weight="normal" textLength="27.8" lengthAdjust="spacingAndGlyphs" >09/01/2023</text>
<text x="325" y="406.98" font-size="6" fill="#4a4a4a" text-anchor="end" font-weight="normal" textLength="19.2" lengthAdjust="spacingAndGlyphs" >87,00 %</text>
<text x="331" y="406.98" font-size="6" fill="#4a4a4a" text-anchor="start" font-weight="normal" textLength="25.6" lengthAdjust="spacingAndGlyphs" >Stagionale</text>
<text x="390.5" y="406.98" font-size="6" fill="#4a4a4a" text-anchor="start" font-weight="normal" textLength="58" lengthAdjust="spacingAndGlyphs" >ASSISTENTE ALL'AUTON</text>
<rect x="10.00" y="412.2" width="37.70" height="9.6" fill="#EAE56F"/>
<rect x="48.90" y="412.2" width="34.30" height="9.6" fill="#EAE56F"/>
<rect x="84.40" y="412.2" width="127.00" height="9.6" fill="#EAE56F"/>
<rect x="212.60" y="412.2" width="37.60" height="9.6" fill="#EAE56F"/>
<rect x="251.40" y="412.2" width="36.80" height="9.6" fill="#EAE56F"/>
<rect x="289.40" y="412.2" width="38.00" height="9.6" fill="#EAE56F"/>
<rect x="328.60" y="412.2" width="58.30" height="9.6" fill="#EAE56F"/>
<rect x="388.10" y="412.2" width="112.30" height="9.6" fill="#EAE56F"/>
<text x="13.6" y="419.2" font-size="5.6" fill="#222" text-anchor="start" font-weight="bold" textLength="14.3" lengthAdjust="spacingAndGlyphs" >Totale</text>
<rect x="11" y="422.1" width="194" height="2.8" rx="1.4" fill="#a4a4a4"/>
<text x="512.8" y="200.2" font-size="6.5" fill="#3a3a3a" text-anchor="start" font-weight="normal" textLength="43.6" lengthAdjust="spacingAndGlyphs" stroke="#444" stroke-width="0.12">Età Media Forza</text>
<path d="M541.30,301.70 A92,92 0 0 1 725.30,301.70 L697.80,301.70 A64.5,64.5 0 0 0 568.80,301.70 Z" fill="#EBEBEB"/>
<path d="M541.30,301.70 A92,92 0 0 1 589.83,220.62 L602.82,244.86 A64.5,64.5 0 0 0 568.80,301.70 Z" fill="#E2D335"/>
<line x1="593.84" y1="218.59" x2="605.63" y2="243.43" stroke="#E07A35" stroke-width="1.15"/>
<text x="576" y="216.7" font-size="7.6" fill="#444" text-anchor="start" font-weight="normal" textLength="17.5" lengthAdjust="spacingAndGlyphs" >37,87</text>
<text x="533.3" y="302.5" font-size="4.5" fill="#777" text-anchor="start" font-weight="normal" textLength="5.6" lengthAdjust="spacingAndGlyphs" >19</text>
<text x="727.6" y="302.5" font-size="4.5" fill="#777" text-anchor="start" font-weight="normal" textLength="5.4" lengthAdjust="spacingAndGlyphs" >73</text>
<text x="600" y="294.6" font-size="28.8" fill="#D5B60C" text-anchor="start" font-weight="normal" textLength="66.9" lengthAdjust="spacingAndGlyphs" >36,96</text>
<text x="515" y="320.2" font-size="6.3" fill="#3a3a3a" text-anchor="start" font-weight="normal" textLength="193.5" lengthAdjust="spacingAndGlyphs" stroke="#444" stroke-width="0.12">Assunti Donne Organico, Assunti Uomini Organico per Fascia Età Risorsa</text>
<line x1="528.3" y1="386.80" x2="750" y2="386.80" stroke="#cfcfcf" stroke-width="0.6" stroke-dasharray="1,1.5"/>
<line x1="528.3" y1="355.98" x2="750" y2="355.98" stroke="#cfcfcf" stroke-width="0.6" stroke-dasharray="1,1.5"/>
<text x="521.5" y="389" font-size="5.6" fill="#777" text-anchor="start" font-weight="normal" textLength="3.2" lengthAdjust="spacingAndGlyphs" >0</text>
<text x="515.2" y="358.3" font-size="5.6" fill="#777" text-anchor="start" font-weight="normal" textLength="9" lengthAdjust="spacingAndGlyphs" >500</text>
<rect x="542.30" y="338.84" width="28" height="5.24" fill="#E2D335"/>
<rect x="542.30" y="344.08" width="28" height="42.72" fill="#D3D3D3"/>
<text x="556.3" y="334.84" font-size="5.9" fill="#333" text-anchor="middle" font-weight="normal" textLength="8.4" lengthAdjust="spacingAndGlyphs" >778</text>
<text x="556.3" y="367.54" font-size="5.9" fill="#333" text-anchor="middle" font-weight="normal" textLength="8.4" lengthAdjust="spacingAndGlyphs" >693</text>
<text x="556.3" y="397.6" font-size="5.6" fill="#777" text-anchor="middle" font-weight="normal" >(Vuoto)</text>
<rect x="575.90" y="386.37" width="28" height="0.43" fill="#EEE69A"/>
<text x="589.9" y="382.37" font-size="5.9" fill="#333" text-anchor="middle" font-weight="normal" textLength="2.8" lengthAdjust="spacingAndGlyphs" >7</text>
<text x="589.9" y="397.6" font-size="5.6" fill="#777" text-anchor="middle" font-weight="normal" >Età &lt;= 18</text>
<text x="589.9" y="405.5" font-size="5.6" fill="#777" text-anchor="middle" font-weight="normal" >anni</text>
<rect x="609.50" y="382.48" width="28" height="0.62" fill="#E2D335"/>
<rect x="609.50" y="383.10" width="28" height="3.70" fill="#D3D3D3"/>
<text x="623.5" y="378.48" font-size="5.9" fill="#333" text-anchor="middle" font-weight="normal" textLength="5.6" lengthAdjust="spacingAndGlyphs" >70</text>
<text x="623.5" y="397.6" font-size="5.6" fill="#777" text-anchor="middle" font-weight="normal" >Età &gt; 55</text>
<text x="623.5" y="405.5" font-size="5.6" fill="#777" text-anchor="middle" font-weight="normal" >anni</text>
<rect x="643.10" y="376.13" width="28" height="1.97" fill="#E2D335"/>
<rect x="643.10" y="378.11" width="28" height="8.69" fill="#D3D3D3"/>
<text x="657.1" y="372.13" font-size="5.9" fill="#333" text-anchor="middle" font-weight="normal" textLength="8.4" lengthAdjust="spacingAndGlyphs" >173</text>
<text x="657.1" y="384.55" font-size="5.9" fill="#333" text-anchor="middle" font-weight="normal" textLength="8.4" lengthAdjust="spacingAndGlyphs" >141</text>
<text x="657.1" y="397.6" font-size="5.6" fill="#777" text-anchor="middle" font-weight="normal" >Età 19-25</text>
<text x="657.1" y="405.5" font-size="5.6" fill="#777" text-anchor="middle" font-weight="normal" >anni</text>
<rect x="676.70" y="367.13" width="28" height="3.51" fill="#E2D335"/>
<rect x="676.70" y="370.65" width="28" height="16.15" fill="#D3D3D3"/>
<text x="690.7" y="363.13" font-size="5.9" fill="#333" text-anchor="middle" font-weight="normal" textLength="8.4" lengthAdjust="spacingAndGlyphs" >319</text>
<text x="690.7" y="380.82" font-size="5.9" fill="#333" text-anchor="middle" font-weight="normal" textLength="8.4" lengthAdjust="spacingAndGlyphs" >262</text>
<text x="690.7" y="397.6" font-size="5.6" fill="#777" text-anchor="middle" font-weight="normal" >Età 26-35</text>
<text x="690.7" y="405.5" font-size="5.6" fill="#777" text-anchor="middle" font-weight="normal" >anni</text>
<rect x="710.30" y="356.41" width="28" height="4.87" fill="#E2D335"/>
<rect x="710.30" y="361.28" width="28" height="25.52" fill="#D3D3D3"/>
<text x="724.3" y="352.41" font-size="5.9" fill="#333" text-anchor="middle" font-weight="normal" textLength="8.4" lengthAdjust="spacingAndGlyphs" >493</text>
<text x="724.3" y="376.14" font-size="5.9" fill="#333" text-anchor="middle" font-weight="normal" textLength="8.4" lengthAdjust="spacingAndGlyphs" >414</text>
<text x="724.3" y="397.6" font-size="5.6" fill="#777" text-anchor="middle" font-weight="normal" >Età 36-55</text>
<text x="724.3" y="405.5" font-size="5.6" fill="#777" text-anchor="middle" font-weight="normal" >anni</text>
<circle cx="517" cy="415" r="2.4" fill="#D3D3D3"/>
<text x="521.2" y="417" font-size="5.8" fill="#333" text-anchor="start" font-weight="normal" textLength="57.8" lengthAdjust="spacingAndGlyphs" stroke="#333" stroke-width="0.12">Assunti Donne Organico</text>
<circle cx="584.8" cy="415" r="2.4" fill="#E2D335"/>
<text x="588.2" y="417" font-size="5.8" fill="#333" text-anchor="start" font-weight="normal" textLength="60" lengthAdjust="spacingAndGlyphs" stroke="#333" stroke-width="0.12">Assunti Uomini Organico</text>
</svg>
</body></html>
